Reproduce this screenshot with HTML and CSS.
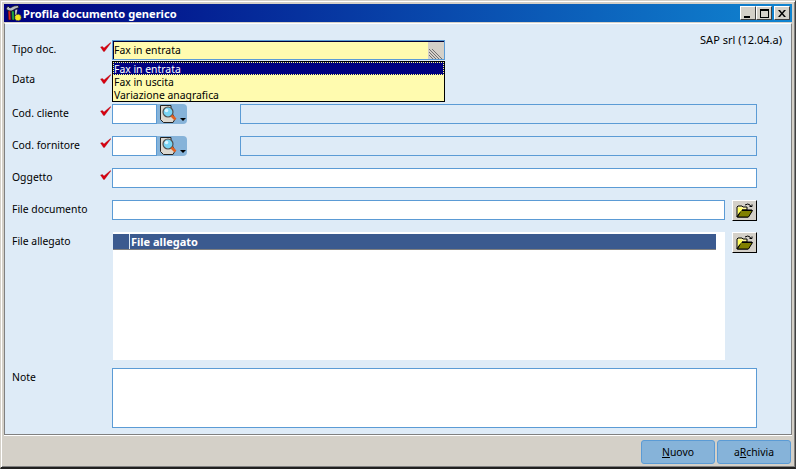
FILE: index.html
```html
<!DOCTYPE html>
<html>
<head>
    <title>Profila documento generico</title>
    <link rel="stylesheet" href="styles.css">
</head>
<body>
    <svg class="defs" width="0" height="0">
        <defs>
            <symbol id="check" viewBox="0 0 11 10">
                <path d="M0.5 5 L2.5 4.5 L4 6 L10.5 0.5 L10.8 1 L4.5 9.5 L3.5 9.5 Z" fill="#D80010" stroke="#A00008" stroke-width="0.3"/>
            </symbol>
            <symbol id="lens" viewBox="0 0 30 20">
                <path d="M3.5 1.5 H14 V7 L18 15 L16 18.5 H6.5 L3.5 15.5 Z" fill="#DCD8D0" stroke="#222" stroke-width="1"/>
                <circle cx="11" cy="8" r="5" fill="#78D4F4" stroke="#505050" stroke-width="1.2"/>
                <circle cx="9.5" cy="6.5" r="1.8" fill="#D8F4FF"/>
                <path d="M14.5 11.5 L18.5 15.5" stroke="#E06020" stroke-width="2.6"/>
                <path d="M23 14 H29 L26 17 Z" fill="#000"/>
            </symbol>
            <symbol id="folder" viewBox="0 0 18 16">
                <path d="M1 14 V4 L2 3 H6 L7 4 H11 V7 H5 L1 14 H12 L16 7 H5" fill="#fff8a0" stroke="#000" stroke-width="1"/>
                <path d="M1.5 14 L5 7.5 H16.5 L12.5 14 Z" fill="#808000" stroke="#000" stroke-width="1"/>
                <path d="M2 5 H6 V7 L2 11 Z" fill="#ffff60"/>
                <path d="M9 2 Q12 0 14 2 L15 4 M13.5 3.5 H16 V1.5" fill="none" stroke="#000" stroke-width="1"/>
            </symbol>
        </defs>
    </svg>

    <div class="window">
        <div class="titlebar">
            <svg class="app-icon" width="17" height="16" viewBox="0 0 17 16">
                <path d="M1 4 L3 1 L5 3 L9 1 L13 0.5 L14 2.5 L10 4 L7 6 L4 6 Z" fill="#B8BCC4" stroke="#111" stroke-width="0.7"/>
                <path d="M3 6 H5.5 L6 15 H3.5 Z" fill="#D82020" stroke="#111" stroke-width="0.5"/>
                <path d="M6.5 6 H9 L9.5 15 H7 Z" fill="#20B040" stroke="#111" stroke-width="0.5"/>
                <path d="M10 5 L12.5 4 L11.5 10 H10 Z" fill="#E8E8F0" stroke="#111" stroke-width="0.5"/>
                <circle cx="13" cy="12.5" r="3.2" fill="#F4E820" stroke="#333" stroke-width="0.9" stroke-dasharray="1.5 0.7"/>
            </svg>
            <span class="title">Profila documento generico</span>
            <div class="win-buttons">
                <span class="win-btn"><i class="min-glyph"></i></span>
                <span class="win-btn"><i class="max-glyph"></i></span>
                <span class="win-btn close-btn">
                    <svg width="8" height="7" viewBox="0 0 8 7"><path d="M0 0 H2 L4 2.5 L6 0 H8 L5 3.5 L8 7 H6 L4 4.5 L2 7 H0 L3 3.5 Z" fill="#000"/></svg>
                </span>
            </div>
        </div>

        <div class="panel">
            <div class="version">SAP srl (12.04.a)</div>

            <div class="row">
                <label>Tipo doc.</label>
                <svg class="check"><use href="#check"/></svg>
                <div class="combo">
                    <span>Fax in entrata</span>
                    <svg class="combo-arrow" width="16" height="17" viewBox="0 0 16 17">
                        <rect width="16" height="17" fill="#D4D0C8"/>
                        <path d="M1 7 L11 17 M1 10 L8 17 M1 13 L5 17 M4 7 L14 17" stroke="#707070" stroke-width="1" fill="none"/>
                    </svg>
                </div>
                <ul class="dropdown">
                    <li class="selected">Fax in entrata</li>
                    <li>Fax in uscita</li>
                    <li>Variazione anagrafica</li>
                </ul>
            </div>

            <div class="row data-row">
                <label>Data</label>
                <svg class="check"><use href="#check"/></svg>
            </div>

            <div class="row">
                <label>Cod. cliente</label>
                <svg class="check"><use href="#check"/></svg>
                <div class="field code"></div>
                <div class="lookup"><svg width="30" height="20"><use href="#lens"/></svg></div>
                <div class="field readonly"></div>
            </div>

            <div class="row">
                <label>Cod. fornitore</label>
                <svg class="check"><use href="#check"/></svg>
                <div class="field code"></div>
                <div class="lookup"><svg width="30" height="20"><use href="#lens"/></svg></div>
                <div class="field readonly"></div>
            </div>

            <div class="row">
                <label>Oggetto</label>
                <svg class="check"><use href="#check"/></svg>
                <div class="field grow"></div>
            </div>

            <div class="row">
                <label>File documento</label>
                <span class="no-check"></span>
                <div class="field grow"></div>
                <div class="folder-btn"><svg width="18" height="16"><use href="#folder"/></svg></div>
            </div>

            <div class="row list-row">
                <label>File allegato</label>
                <span class="no-check"></span>
                <div class="list">
                    <div class="list-head"><span>File allegato</span></div>
                </div>
                <div class="folder-btn"><svg width="18" height="16"><use href="#folder"/></svg></div>
            </div>

            <div class="row note-row">
                <label>Note</label>
                <span class="no-check"></span>
                <div class="field grow note"></div>
            </div>
        </div>

        <div class="footer">
            <div class="action"><u>N</u>uovo</div>
            <div class="action">a<u>R</u>chivia</div>
        </div>
    </div>
</body>
</html>
```

FILE: styles.css
```css
html, body {
    margin: 0;
    height: 100%;
    overflow: hidden;
}
body {
    font-family: "Noto Sans", "DejaVu Sans", sans-serif;
    font-size: 10.4px;
    color: #000000;
    background-color: #D4D0C8;
}
.defs {
    display: block;
}
.window {
    width: 796px;
    height: 469px;
    box-sizing: border-box;
    display: flex;
    flex-direction: column;
    padding: 3px 3px 2px 3px;
    border-top: 1px solid #D4D0C8;
    border-left: 1px solid #D4D0C8;
    border-right: 1px solid #404040;
    border-bottom: 2px solid #202020;
    background-color: #D4D0C8;
    box-shadow: inset 1px 1px 0 #FFFFFF, inset -1px -1px 0 #808080;
}

/* title bar */
.titlebar {
    height: 18px;
    display: flex;
    align-items: center;
    padding: 0 2px 0 1px;
    background: linear-gradient(to right, #000080, #1084D0);
}
.app-icon {
    flex: none;
}
.title {
    margin-left: 1px;
    color: #FFFFFF;
    font-weight: bold;
    font-size: 11.1px;
    white-space: nowrap;
}
.win-buttons {
    margin-left: auto;
    display: flex;
}
.win-btn {
    width: 16px;
    height: 14px;
    box-sizing: border-box;
    display: flex;
    align-items: center;
    justify-content: center;
    background-color: #D4D0C8;
    border: 1px solid;
    border-color: #FFFFFF #404040 #404040 #FFFFFF;
}
.close-btn {
    margin-left: 2px;
}
.min-glyph {
    width: 6px;
    height: 2px;
    margin-top: 7px;
    margin-right: 2px;
    background-color: #000000;
}
.max-glyph {
    width: 9px;
    height: 9px;
    box-sizing: border-box;
    border: 1px solid #000000;
    border-top-width: 2px;
}

/* form */
.panel {
    position: relative;
    height: 412px;
    margin-top: 1px;
    box-sizing: border-box;
    display: flex;
    flex-direction: column;
    gap: 12px;
    padding: 16px 34px 0 7px;
    background-color: #DEEBF7;
    border-left: 1px solid #808080;
    border-top: 1px solid #FFFFFF;
    border-right: 1px solid #808080;
    border-bottom: 1px solid #808080;
    box-shadow: 0 1px 0 #FFFFFF;
}
.version {
    position: absolute;
    top: 8px;
    right: 9px;
    font-size: 11px;
}
.row {
    position: relative;
    height: 20px;
    flex: none;
    display: flex;
}
.row label {
    width: 88px;
    flex: none;
    line-height: 18px;
}
.data-row label {
    margin-top: -2px;
}
.check {
    width: 11px;
    height: 10px;
    flex: none;
    margin: 2px 1px 0 0;
}
.no-check {
    width: 12px;
    flex: none;
}
.field {
    box-sizing: border-box;
    height: 20px;
    border: 1px solid #5B9BD5;
    background-color: #FFFFFF;
}
.field.code {
    width: 45px;
}
.field.readonly {
    flex: 1;
    margin-left: 53px;
    background-color: #DEEBF7;
}
.field.grow {
    flex: 1;
}
.lookup {
    width: 30px;
    height: 20px;
    background-color: #86B3D9;
    border-radius: 0 4px 4px 0;
}
.lookup svg {
    display: block;
}

/* tipo doc combo */
.combo {
    flex: 1;
    max-width: 333px;
    box-sizing: border-box;
    height: 20px;
    display: flex;
    justify-content: space-between;
    padding-left: 1px;
    line-height: 19px;
    background-color: #FFFBAF;
    border: 1px solid #5B9BD5;
    box-shadow: inset 1px 1px 0 #000033;
}
.combo-arrow {
    margin: 1px 0 0 0;
}
.dropdown {
    position: absolute;
    top: 21px;
    left: 100px;
    width: 333px;
    box-sizing: border-box;
    margin: 0;
    padding: 0;
    list-style: none;
    background-color: #FFFBAF;
    border: 1px solid #000000;
}
.dropdown li {
    height: 13px;
    line-height: 15px;
    padding-left: 1px;
}
.dropdown li.selected {
    color: #FFFFFF;
    background-color: #000080;
    outline: 1px dotted #FFFF80;
    outline-offset: -1px;
}

/* files */
.folder-btn {
    width: 25px;
    height: 21px;
    margin-left: 7px;
    box-sizing: border-box;
    display: flex;
    align-items: center;
    justify-content: center;
    background-color: #D4D0C8;
    border: 1px solid;
    border-color: #FFFFFF #000000 #000000 #FFFFFF;
}
.list-row {
    height: 128px;
}
.list {
    flex: 1;
    margin-left: 1px;
    padding-top: 2px;
    background-color: #FFFFFF;
}
.list-head {
    width: 603px;
    height: 16px;
    box-sizing: border-box;
    padding-left: 16px;
    background-color: #3B5A8F;
    border-bottom: 1px solid #808080;
}
.list-head span {
    display: block;
    height: 15px;
    padding-left: 1px;
    font-size: 11px;
    line-height: 15px;
    color: #FFFFFF;
    font-weight: bold;
    border-left: 1px solid #DEEBF7;
}
.note-row {
    height: 60px;
    margin-top: -4px;
}
.field.note {
    height: 60px;
}

/* bottom buttons */
.footer {
    flex: 1;
    display: flex;
    justify-content: flex-end;
    align-items: flex-end;
    gap: 2px;
    padding: 0 1px 1px 0;
}
.action {
    width: 74px;
    height: 24px;
    box-sizing: border-box;
    text-align: center;
    line-height: 22px;
    background-color: #86B3D9;
    border: 1px solid #5B9BD5;
    border-radius: 3px;
}
```
